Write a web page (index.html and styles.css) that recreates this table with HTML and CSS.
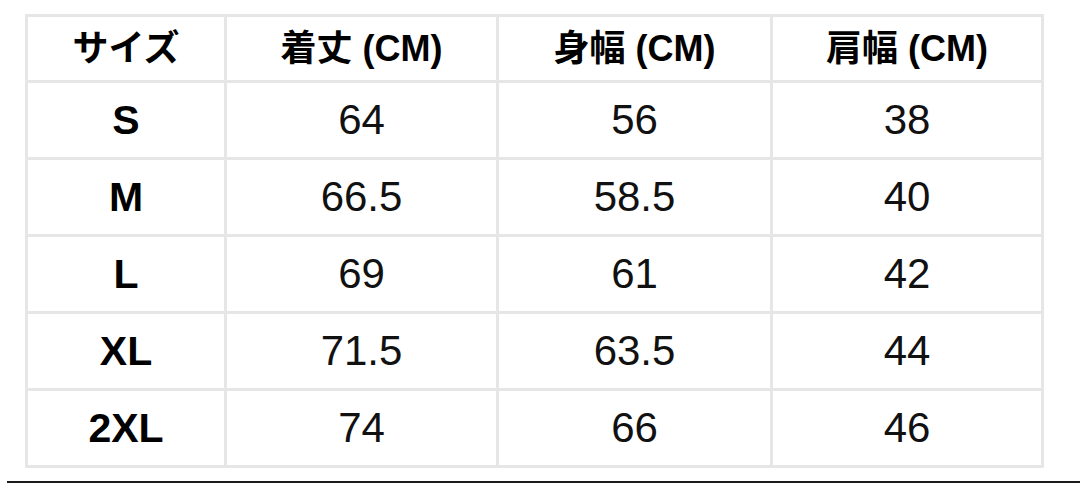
FILE: index.html
```html
<!DOCTYPE html>
<html lang="ja">
<head>
<meta charset="utf-8">
<title>サイズ表</title>
<link rel="stylesheet" href="styles.css">
</head>
<body>
<div class="page">
  <div class="size-table">
    <div class="cell head">サイズ</div>
    <div class="cell head">着丈 (CM)</div>
    <div class="cell head">身幅 (CM)</div>
    <div class="cell head">肩幅 (CM)</div>

    <div class="cell size">S</div>
    <div class="cell">64</div>
    <div class="cell">56</div>
    <div class="cell">38</div>

    <div class="cell size">M</div>
    <div class="cell">66.5</div>
    <div class="cell">58.5</div>
    <div class="cell">40</div>

    <div class="cell size">L</div>
    <div class="cell">69</div>
    <div class="cell">61</div>
    <div class="cell">42</div>

    <div class="cell size">XL</div>
    <div class="cell">71.5</div>
    <div class="cell">63.5</div>
    <div class="cell">44</div>

    <div class="cell size">2XL</div>
    <div class="cell">74</div>
    <div class="cell">66</div>
    <div class="cell">46</div>
  </div>
  <div class="rule"></div>
</div>
</body>
</html>
```
FILE: styles.css
```css
html, body {
  margin: 0;
  padding: 0;
  background: #ffffff;
}

.page {
  width: 1080px;
  height: 484px;
  overflow: hidden;
  padding-top: 14px;
  box-sizing: border-box;
  font-family: "Liberation Sans", "Noto Sans CJK JP", Arial, sans-serif;
  color: #000;
}

.size-table {
  margin-left: 25px;
  width: max-content;
  display: grid;
  grid-template-columns: 196px 269px 271px 268px;
  grid-template-rows: 63px repeat(5, 74px);
  gap: 3px;
  padding: 3px;
  background: #e6e6e6;
}

.cell {
  background: #fff;
  display: flex;
  align-items: center;
  justify-content: center;
  font-size: 42px;
  line-height: 1;
  color: #111;
}

.head {
  font-weight: 700;
  font-size: 36px;
  color: #000;
}

.size {
  font-weight: 700;
  font-size: 41px;
  color: #000;
}

.rule {
  margin-top: 13px;
  margin-left: 7px;
  height: 2px;
  background: #1a1a1a;
}
```
